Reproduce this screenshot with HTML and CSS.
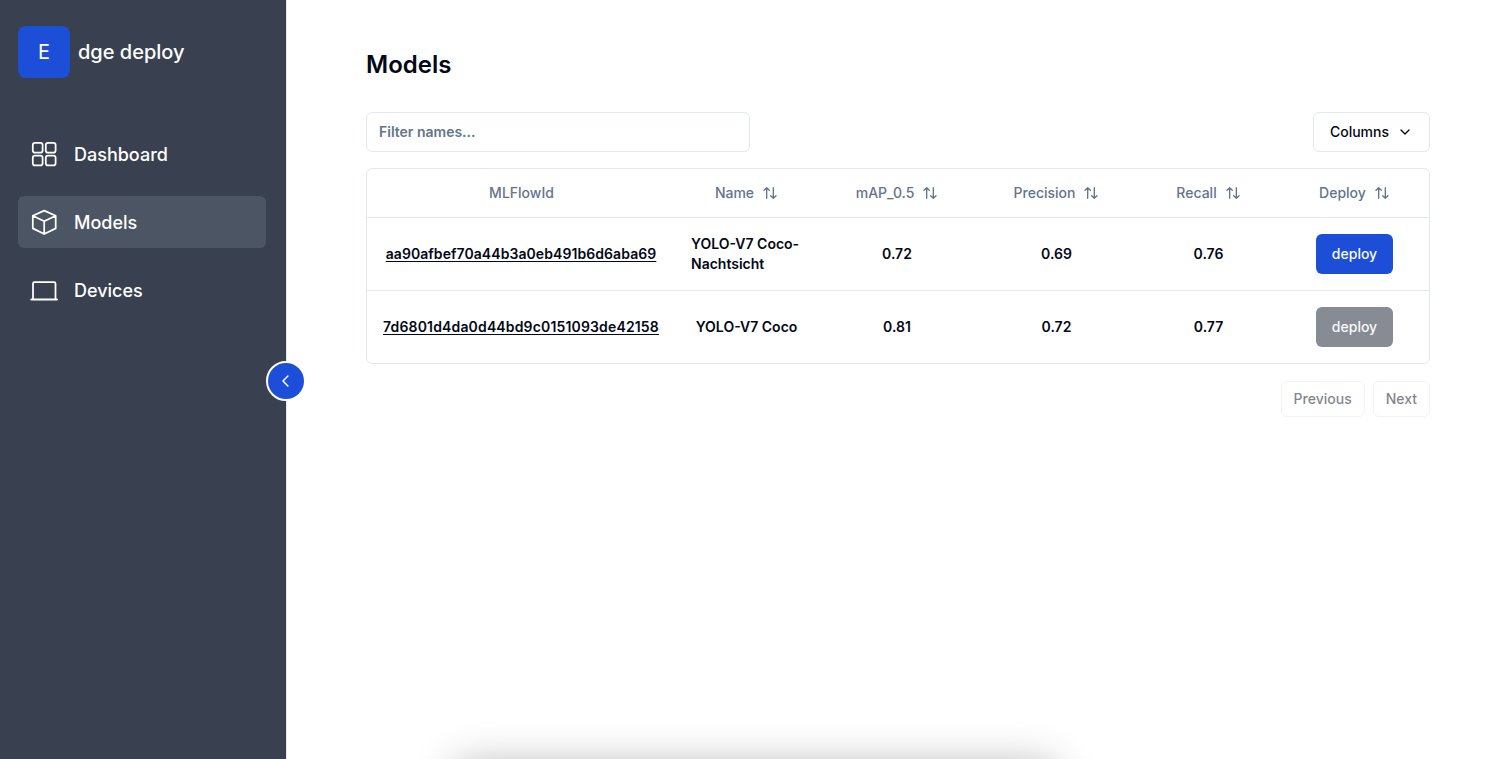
FILE: index.html
```html
<!DOCTYPE html>
<html lang="en">
<head>
<meta charset="utf-8">
<title>Edge deploy</title>
<link rel="stylesheet" href="styles.css">
</head>
<body>
<svg class="defs" width="0" height="0">
  <symbol id="sort" viewBox="0 0 24 24"><path d="m21 16-4 4-4-4M17 20V4M3 8l4-4 4 4M7 4v16"/></symbol>
</svg>
<div class="app">
  <aside class="sidebar">
    <div class="brand"><span class="logo">E</span><span>dge deploy</span></div>
    <nav class="nav">
      <a class="nav-item"><svg class="nav-icon" viewBox="0 0 28 28"><rect x="2.8" y="2.8" width="9.8" height="9.8" rx="2.2"/><rect x="15.8" y="2.8" width="9.8" height="9.8" rx="2.2"/><rect x="2.8" y="15.6" width="9.8" height="9.8" rx="2.2"/><rect x="15.8" y="15.6" width="9.8" height="9.8" rx="2.2"/></svg><span>Dashboard</span></a>
      <a class="nav-item active"><svg class="nav-icon" viewBox="0 0 28 28"><path d="M14.2 2.6 25.7 7.8V20.4L14.2 26 2.8 20.4V7.8ZM2.8 7.8 14.2 13.2 25.7 7.8M14.2 13.2V26"/></svg><span>Models</span></a>
      <a class="nav-item"><svg class="nav-icon" viewBox="0 0 28 28"><path d="M3 23V7.5Q3 6 4.5 6H24Q25.5 6 25.5 7.5V23"/><path class="base" d="M1.3 23.5H27"/></svg><span>Devices</span></a>
    </nav>
    <button class="collapse"><svg viewBox="0 0 12 12"><path d="M7.9 1 3 6l4.9 5"/></svg></button>
  </aside>
  <main class="main">
    <h1>Models</h1>
    <div class="toolbar">
      <input class="filter" placeholder="Filter names...">
      <button class="btn columns">Columns<svg viewBox="0 0 24 24"><path d="m6 9 6 6 6-6"/></svg></button>
    </div>
    <div class="table-wrap">
      <table>
        <colgroup><col class="c-id"><col class="c-name"><col class="c-map"><col class="c-precision"><col class="c-recall"><col class="c-deploy"></colgroup>
        <thead>
          <tr>
            <th>MLFlowId</th>
            <th><span class="sort">Name<svg><use href="#sort"/></svg></span></th>
            <th><span class="sort">mAP_0.5<svg><use href="#sort"/></svg></span></th>
            <th><span class="sort">Precision<svg><use href="#sort"/></svg></span></th>
            <th><span class="sort">Recall<svg><use href="#sort"/></svg></span></th>
            <th><span class="sort">Deploy<svg><use href="#sort"/></svg></span></th>
          </tr>
        </thead>
        <tbody>
          <tr>
            <td><a class="link">aa90afbef70a44b3a0eb491b6d6aba69</a></td>
            <td><div class="name">YOLO-V7 Coco-Nachtsicht</div></td>
            <td>0.72</td><td>0.69</td><td>0.76</td>
            <td><button class="deploy">deploy</button></td>
          </tr>
          <tr>
            <td><a class="link wide">7d6801d4da0d44bd9c0151093de42158</a></td>
            <td><div class="name">YOLO-V7 Coco</div></td>
            <td>0.81</td><td>0.72</td><td>0.77</td>
            <td><button class="deploy off">deploy</button></td>
          </tr>
        </tbody>
      </table>
    </div>
    <div class="pager"><button class="btn page">Previous</button><button class="btn page">Next</button></div>
  </main>
  <div class="shade"></div>
</div>
</body>
</html>
```
FILE: styles.css
```css
* { box-sizing: border-box; }
body { margin: 0; background: #fff; color: #020817; font: 600 14px/20px Inter, sans-serif; }
button, input { font: inherit; margin: 0; }
svg { fill: none; stroke: currentColor; stroke-width: 2; stroke-linecap: round; stroke-linejoin: round; flex: none; }
.defs { position: absolute; }
.app { display: flex; height: 759px; position: relative; overflow: hidden; }
.sidebar { position: relative; width: 287px; padding: 26px 20px 0 18px; background: #394150; border-right: 1px solid #e2e8f0; color: #fff; flex: none; }
.brand { display: flex; align-items: center; gap: 8px; font-size: 20px; line-height: 28px; font-weight: 500; }
.logo { display: flex; align-items: center; justify-content: center; width: 52px; height: 52px; border-radius: 8px; background: #1d4ed8; font-weight: 400; }
.nav { display: flex; flex-direction: column; gap: 16px; margin-top: 50px; }
.nav-item { display: flex; align-items: center; gap: 16px; height: 52px; padding: 0 12px; border-radius: 6px; font-size: 18px; line-height: 28px; font-weight: 500; }
.nav-item span { padding-top: 2px; }
.active { background: #4c5563; }
.nav-icon { width: 28px; height: 28px; stroke-width: 1.75; }
.base { stroke-width: 2; }
.collapse { position: absolute; left: 266px; top: 361px; width: 40px; height: 40px; padding: 0; display: flex; align-items: center; justify-content: center; border: 2px solid #fff; border-radius: 50%; background: #1d4ed8; color: #fff; }
.collapse svg { width: 12px; height: 12px; stroke-width: 1.5; }
.main { flex: 1; padding: 49px 75px 0 79px; }
h1 { margin: 0 0 31px; font-size: 24px; line-height: 32px; font-weight: 600; }
.toolbar { display: flex; justify-content: space-between; margin-bottom: 16px; }
.filter { width: 384px; height: 40px; padding: 7px 12px 9px; border: 1px solid #e2e8f0; border-radius: 6px; background: #fff; }
.filter::placeholder { color: #64748b; opacity: 1; }
.btn { display: flex; align-items: center; border: 1px solid #e2e8f0; border-radius: 6px; background: #fff; color: #020817; font-weight: 500; }
.columns { height: 40px; padding: 0 16px; }
.columns svg { width: 16px; height: 16px; margin-left: 8px; }
.table-wrap { border: 1px solid #e2e8f0; border-radius: 6px; }
table { width: 100%; table-layout: fixed; border-collapse: collapse; }
.c-id { width: 308px; } .c-name { width: 143px; } .c-map { width: 158px; } .c-precision { width: 161px; } .c-recall { width: 143px; } .c-deploy { width: 149px; }
th { height: 48px; padding: 0; color: #64748b; font-weight: 500; text-align: center; }
th:first-child { padding-left: 1px; }
td { height: 72.5px; padding: 16px; text-align: center; }
tbody tr { border-top: 1px solid #e2e8f0; }
.sort { display: inline-flex; align-items: center; vertical-align: middle; }
.sort svg { width: 16px; height: 16px; margin-left: 8px; }
.name { width: fit-content; margin: 0 auto; text-align: left; }
.link { text-decoration: underline; text-underline-offset: 2px; letter-spacing: .07px; }
.wide { letter-spacing: .155px; }
td:first-child { padding: 0; }
.deploy { display: block; margin: 0 auto; height: 40px; padding: 0 16px; border: 0; border-radius: 6px; background: #1d4ed8; color: #f8fafc; font-weight: 500; }
.off { background: #878b94; }
.pager { display: flex; justify-content: flex-end; gap: 8px; margin-top: 17px; }
.page { height: 36px; padding: 0 12px; opacity: .5; }
.shade { position: absolute; left: 454px; top: 765px; width: 602px; height: 60px; border-radius: 12px; box-shadow: 0 0 42px rgba(0, 0, 0, .3); }
```
